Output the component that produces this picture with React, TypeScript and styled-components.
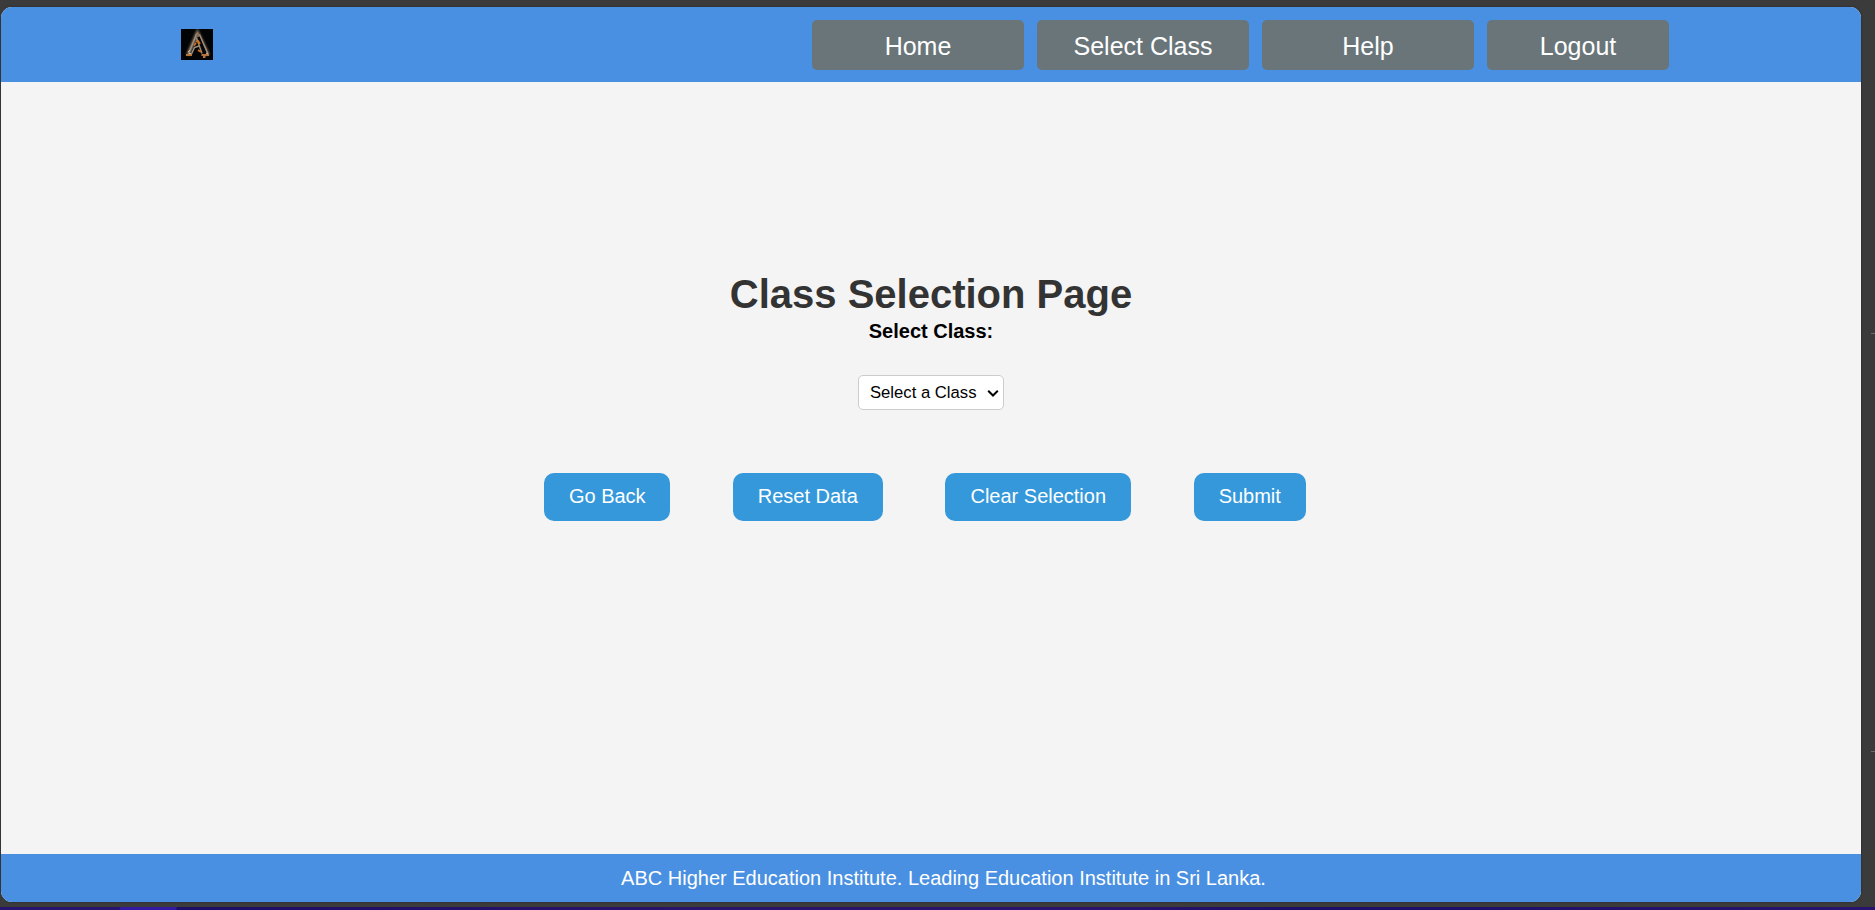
import React from "react";
import styled, { createGlobalStyle } from "styled-components";

const GlobalStyle = createGlobalStyle`
  * { box-sizing: border-box; }
  body {
    margin: 0;
    background: #3b3b3b;
    font-family: "Liberation Sans", Arial, sans-serif;
    overflow: hidden;
  }
`;

const Desktop = styled.div`
  display: flex;
  flex-direction: column;
  width: 1875px;
  height: 910px;
  padding-top: 7px;
`;

const Workspace = styled.div`
  display: flex;
  justify-content: space-between;
  height: 900px;
  padding: 0 0 5px 1px;
`;

const Window = styled.div`
  display: flex;
  flex-direction: column;
  width: 1860px;
  height: 895px;
  border-radius: 11px;
  overflow: hidden;
  background: #f4f4f4;
  box-shadow: 0 0 2px #222;
`;

const EdgeRail = styled.div`
  display: flex;
  flex-direction: column;
  gap: 417px;
  width: 4px;
  padding-top: 326px;
`;

const Tick = styled.span`
  height: 1px;
  background: #6c6c6c;
`;

const Header = styled.header`
  display: flex;
  flex: none;
  align-items: center;
  justify-content: space-between;
  height: 75px;
  padding: 0 192px 0 180px;
  background: #4a90e2;
`;

const Logo = styled.svg`
  display: block;
  margin-bottom: 1px;
`;

const Nav = styled.nav`
  display: flex;
  gap: 13px;
`;

const NavButton = styled.button<{ $width: number }>`
  width: ${(p) => p.$width}px;
  height: 50px;
  padding: 4px 0 0;
  border: 0;
  border-radius: 5px;
  background: #697579;
  color: #fff;
  font: 25px "Liberation Sans", Arial, sans-serif;
`;

const Main = styled.main`
  display: flex;
  flex: 1;
  flex-direction: column;
  align-items: center;
  padding-top: 189px;
`;

const Title = styled.h1`
  margin: 0;
  color: #333;
  font-size: 40px;
  line-height: 46px;
`;

const Label = styled.label`
  font-size: 20px;
  font-weight: bold;
  line-height: 23px;
  margin-top: 3px;
`;

const ClassSelect = styled.button`
  display: flex;
  align-items: center;
  justify-content: space-between;
  width: 146px;
  height: 35px;
  margin-top: 32px;
  padding: 0 4px 0 11px;
  border: 1px solid #ccc;
  border-radius: 5px;
  background: #fff;
  color: #000;
  font: 16.67px "Liberation Sans", Arial, sans-serif;
`;

const Actions = styled.div`
  display: flex;
  gap: 62.5px;
  margin: 63px 12px 0 0;
`;

const ActionButton = styled.button<{ $width: number }>`
  width: ${(p) => p.$width}px;
  height: 48px;
  padding: 0 0 2px;
  border: 0;
  border-radius: 10px;
  background: #3498db;
  color: #fff;
  font: 20px "Liberation Sans", Arial, sans-serif;
`;

const Footer = styled.footer`
  flex: none;
  height: 48px;
  padding-left: 25px;
  background: #4a90e2;
  color: #fff;
  font-size: 20px;
  line-height: 48px;
  text-align: center;
`;

const Taskbar = styled.div`
  height: 3px;
  background: linear-gradient(90deg, #28136f 0 120px, #3219a0 120px 176px, #1d0d65 177px, #2b126b 700px, #2c126c 1100px, #1c0d66 1290px, #28136f);
`;

const navItems = [
  { label: "Home", width: 212 },
  { label: "Select Class", width: 212 },
  { label: "Help", width: 212 },
  { label: "Logout", width: 182 },
];

const actions = [
  { label: "Go Back", width: 126 },
  { label: "Reset Data", width: 150 },
  { label: "Clear Selection", width: 186 },
  { label: "Submit", width: 112 },
];

function BrandLogo() {
  return (
    <Logo width="32" height="31" viewBox="0 0 32 31" fill="none">
      <defs>
        <filter id="glow" x="-30%" y="-30%" width="160%" height="160%">
          <feGaussianBlur stdDeviation="1.3" />
        </filter>
      </defs>
      <rect width="32" height="31" fill="#020304" />
      <path d="M7 26L16.5 4L27 26" stroke="#75695d" strokeWidth="4" filter="url(#glow)" />
      <path d="M17.5 8L24.5 25" stroke="#080706" strokeWidth="3" />
      <path d="M15.5 5L7.5 25M18.5 5.5L27 25M15.5 9L21 24.5M10.5 25L13.5 18.5L18 17" stroke="#a08c78" strokeWidth="1.4" />
      <path d="M14.5 6L16.5 4L18.5 6.5" stroke="#94735b" strokeWidth="1.4" />
      <path d="M15 12.5L18 12M17.5 12.5L19 15M13 16.5L15 14M17 21L20 23" stroke="#c96f20" strokeWidth="1.8" />
      <path d="M5 26H11M20.5 26H28M22 28H24.5" stroke="#b87438" strokeWidth="1.8" />
      <path d="M7 23L9 21M8 24.5H10M25 24L27 25" stroke="#d3b99a" strokeWidth="1" />
    </Logo>
  );
}

export default function App() {
  return (
    <>
      <GlobalStyle />
      <Desktop>
        <Workspace>
          <Window>
            <Header>
              <BrandLogo />
              <Nav>
                {navItems.map((item) => (
                  <NavButton key={item.label} $width={item.width}>{item.label}</NavButton>
                ))}
              </Nav>
            </Header>
            <Main>
              <Title>Class Selection Page</Title>
              <Label>Select Class:</Label>
              <ClassSelect>
                Select a Class
                <svg width="12" height="10" viewBox="0 0 12 10" fill="none">
                  <path d="M1.2 2.8L6 7.5L10.8 2.8" stroke="#000" strokeWidth="2" />
                </svg>
              </ClassSelect>
              <Actions>
                {actions.map((action) => (
                  <ActionButton key={action.label} $width={action.width}>{action.label}</ActionButton>
                ))}
              </Actions>
            </Main>
            <Footer>ABC Higher Education Institute. Leading Education Institute in Sri Lanka.</Footer>
          </Window>
          <EdgeRail>
            <Tick />
            <Tick />
          </EdgeRail>
        </Workspace>
        <Taskbar />
      </Desktop>
    </>
  );
}
